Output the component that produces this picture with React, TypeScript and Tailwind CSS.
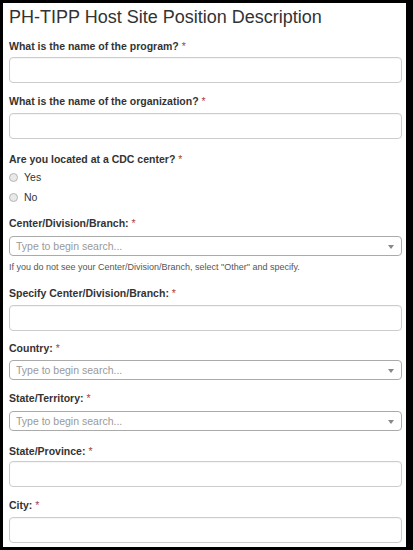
import React from "react";

const font = { fontFamily: '"Liberation Sans", Arial, sans-serif' };

function Label({ text, className = "" }: { text: string; className?: string }) {
  return (
    <div className={"text-[10.5px] leading-[15px] font-bold text-[#333] " + className}>
      {text} <span className="text-[#a94442] font-normal">*</span>
    </div>
  );
}

function TextInput({ className = "" }: { className?: string }) {
  return (
    <input
      type="text"
      className={"block w-full h-[26px] rounded-[4px] border border-[#cccccc] bg-white outline-none shadow-[inset_0_1px_1px_rgba(0,0,0,0.04)] " + className}
    />
  );
}

function SelectBox({ className = "" }: { className?: string }) {
  return (
    <div
      className={"flex items-center justify-between h-[20px] rounded-[4px] border border-[#aaaaaa] bg-white pl-[6px] pr-[7px] " + className}
    >
      <span className="text-[10.5px] leading-[18px] text-[#999]">Type to begin search...</span>
      <svg width="6" height="4" viewBox="0 0 6 4" className="mt-[1px]">
        <path d="M0 0 L6 0 L3 4 Z" fill="#888" />
      </svg>
    </div>
  );
}

function Radio({ label }: { label: string }) {
  return (
    <div className="flex items-center h-[20px]">
      <span className="w-[9px] h-[9px] rounded-full border border-[#b5b5b5] bg-[#e9e9e9] shrink-0" />
      <span className="ml-[6px] text-[10.5px] leading-[20px] text-[#333]">{label}</span>
    </div>
  );
}

export default function App() {
  return (
    <div className="w-[413px] h-[550px] bg-black pt-[3px] pl-[3px] pr-[7px] pb-[3px]" style={font}>
      <div className="h-full bg-white overflow-hidden pl-[6px] pr-[4px] pt-[4px]">
        <div className="text-[18px] leading-[20px] text-[#333]">PH-TIPP Host Site Position Description</div>

        <Label text="What is the name of the program?" className="mt-[12px] mb-[3px]" />
        <TextInput />

        <Label text="What is the name of the organization?" className="mt-[11px] mb-[4px]" />
        <TextInput />

        <Label text="Are you located at a CDC center?" className="mt-[13px]" />
        <Radio label="Yes" />
        <Radio label="No" />

        <Label text="Center/Division/Branch:" className="mt-[9px] mb-[5px]" />
        <SelectBox />
        <div className="mt-[5px] text-[9px] leading-[12px] text-[#555]">
          If you do not see your Center/Division/Branch, select "Other" and specify.
        </div>

        <Label text="Specify Center/Division/Branch:" className="mt-[13px] mb-[4px]" />
        <TextInput />

        <Label text="Country:" className="mt-[10px] mb-[4px]" />
        <SelectBox />

        <Label text="State/Territory:" className="mt-[11px] mb-[5px]" />
        <SelectBox />

        <Label text="State/Province:" className="mt-[13px] mb-[2px]" />
        <TextInput />

        <Label text="City:" className="mt-[11px] mb-[4px]" />
        <TextInput />
      </div>
    </div>
  );
}
